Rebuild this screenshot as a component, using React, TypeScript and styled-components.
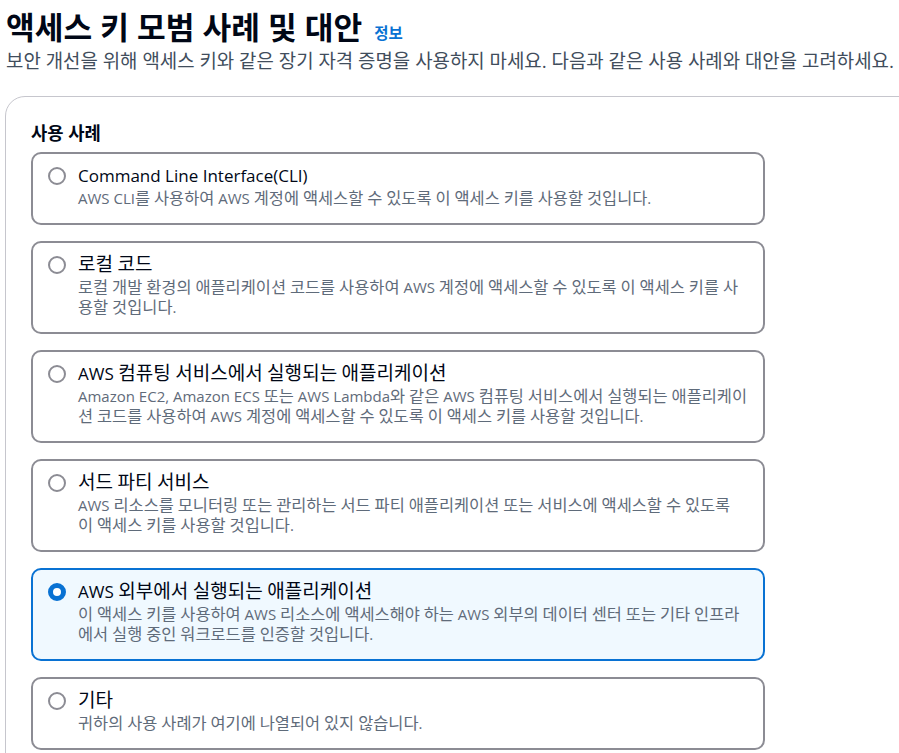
import * as React from 'react';
import styled, { createGlobalStyle } from 'styled-components';

const GlobalStyle = createGlobalStyle`
  html, body {
    margin: 0;
    padding: 0;
    overflow: hidden;
    background: #ffffff;
  }
  body {
    font-family: "Open Sans", "Noto Sans CJK KR", sans-serif;
    color: #000716;
  }
`;

interface UseCase {
  id: string;
  title: string;
  description: string;
}

const useCases: UseCase[] = [
  {
    id: 'cli',
    title: 'Command Line Interface(CLI)',
    description:
      'AWS CLI를 사용하여 AWS 계정에 액세스할 수 있도록 이 액세스 키를 사용할 것입니다.',
  },
  {
    id: 'local',
    title: '로컬 코드',
    description:
      '로컬 개발 환경의 애플리케이션 코드를 사용하여 AWS 계정에 액세스할 수 있도록 이 액세스 키를 사용할 것입니다.',
  },
  {
    id: 'compute',
    title: 'AWS 컴퓨팅 서비스에서 실행되는 애플리케이션',
    description:
      'Amazon EC2, Amazon ECS 또는 AWS Lambda와 같은 AWS 컴퓨팅 서비스에서 실행되는 애플리케이션 코드를 사용하여 AWS 계정에 액세스할 수 있도록 이 액세스 키를 사용할 것입니다.',
  },
  {
    id: 'third-party',
    title: '서드 파티 서비스',
    description:
      'AWS 리소스를 모니터링 또는 관리하는 서드 파티 애플리케이션 또는 서비스에 액세스할 수 있도록 이 액세스 키를 사용할 것입니다.',
  },
  {
    id: 'outside',
    title: 'AWS 외부에서 실행되는 애플리케이션',
    description:
      '이 액세스 키를 사용하여 AWS 리소스에 액세스해야 하는 AWS 외부의 데이터 센터 또는 기타 인프라에서 실행 중인 워크로드를 인증할 것입니다.',
  },
  {
    id: 'other',
    title: '기타',
    description: '귀하의 사용 사례가 여기에 나열되어 있지 않습니다.',
  },
];

const Hangul = styled.span<{ scale: number }>`
  font-size: ${({ scale }) => scale}em;
  line-height: 1;
`;

const HANGUL_RUN = /([\u3131-\u318e\uac00-\ud7a3]+)/;

const mixed = (text: string, scale: number) =>
  text
    .split(HANGUL_RUN)
    .filter(Boolean)
    .map((part, i) =>
      HANGUL_RUN.test(part) ? (
        <Hangul key={i} scale={scale}>
          {part}
        </Hangul>
      ) : (
        part
      )
    );

const Page = styled.div`
  padding: 8px 0 0 6px;
`;

const HeaderRow = styled.div`
  display: flex;
  align-items: baseline;
  gap: 12px;
`;

const Title = styled.h1`
  margin: 0;
  font-size: 31.2px;
  line-height: 38px;
  font-weight: 700;
  color: #000716;
`;

const InfoLink = styled.a`
  font-size: 15.5px;
  font-weight: 700;
  color: #0972d3;
  text-decoration: none;
`;

const Subtitle = styled.p`
  margin: 3px 0 0;
  font-size: 18.9px;
  line-height: 24px;
  color: #414d5c;
  white-space: nowrap;
`;

const Container = styled.section`
  margin-top: 23px;
  margin-left: -1px;
  width: 1000px;
  border: 1px solid #c6c6cd;
  border-radius: 20px;
  padding: 24px 25px 30px;
`;

const SectionHeader = styled.h2`
  margin: 0 0 7px;
  font-size: 17.7px;
  line-height: 24px;
  font-weight: 700;
  color: #000716;
`;

const TileList = styled.div`
  display: flex;
  flex-direction: column;
  gap: 16px;
  width: 734px;
`;

const Tile = styled.label<{ selected: boolean }>`
  display: flex;
  align-items: flex-start;
  gap: 12px;
  padding: 10px 14px 15px 15px;
  border: 2px solid ${({ selected }) => (selected ? '#0972d3' : '#8c8c94')};
  border-radius: 10px;
  background: ${({ selected }) => (selected ? '#f0f9ff' : '#ffffff')};
  cursor: pointer;
`;

const Radio = styled.span<{ checked: boolean }>`
  flex: none;
  box-sizing: border-box;
  width: 18px;
  height: 18px;
  margin-top: 3px;
  border-radius: 50%;
  background: #ffffff;
  border: ${({ checked }) =>
    checked ? '5.5px solid #0972d3' : '2px solid #8c8c94'};
`;

const TileText = styled.div`
  display: flex;
  flex-direction: column;
  min-width: 0;
`;

const TileTitle = styled.span`
  font-size: 17px;
  line-height: 24px;
  color: #000716;
`;

const TileDescription = styled.span`
  font-size: 15px;
  line-height: 20px;
  color: #5f6b7a;
`;

export default function App() {
  const [selected, setSelected] = React.useState('outside');

  return (
    <Page>
      <GlobalStyle />
      <HeaderRow>
        <Title>액세스 키 모범 사례 및 대안</Title>
        <InfoLink href="#">정보</InfoLink>
      </HeaderRow>
      <Subtitle>
        보안 개선을 위해 액세스 키와 같은 장기 자격 증명을 사용하지 마세요. 다음과 같은 사용 사례와 대안을 고려하세요.
      </Subtitle>
      <Container>
        <SectionHeader>사용 사례</SectionHeader>
        <TileList role="radiogroup">
          {useCases.map(item => (
            <Tile
              key={item.id}
              selected={selected === item.id}
              onClick={() => setSelected(item.id)}
            >
              <Radio checked={selected === item.id} role="radio" />
              <TileText>
                <TileTitle>{mixed(item.title, 1.12)}</TileTitle>
                <TileDescription>
                  {mixed(item.description, 1.095)}
                </TileDescription>
              </TileText>
            </Tile>
          ))}
        </TileList>
      </Container>
    </Page>
  );
}
